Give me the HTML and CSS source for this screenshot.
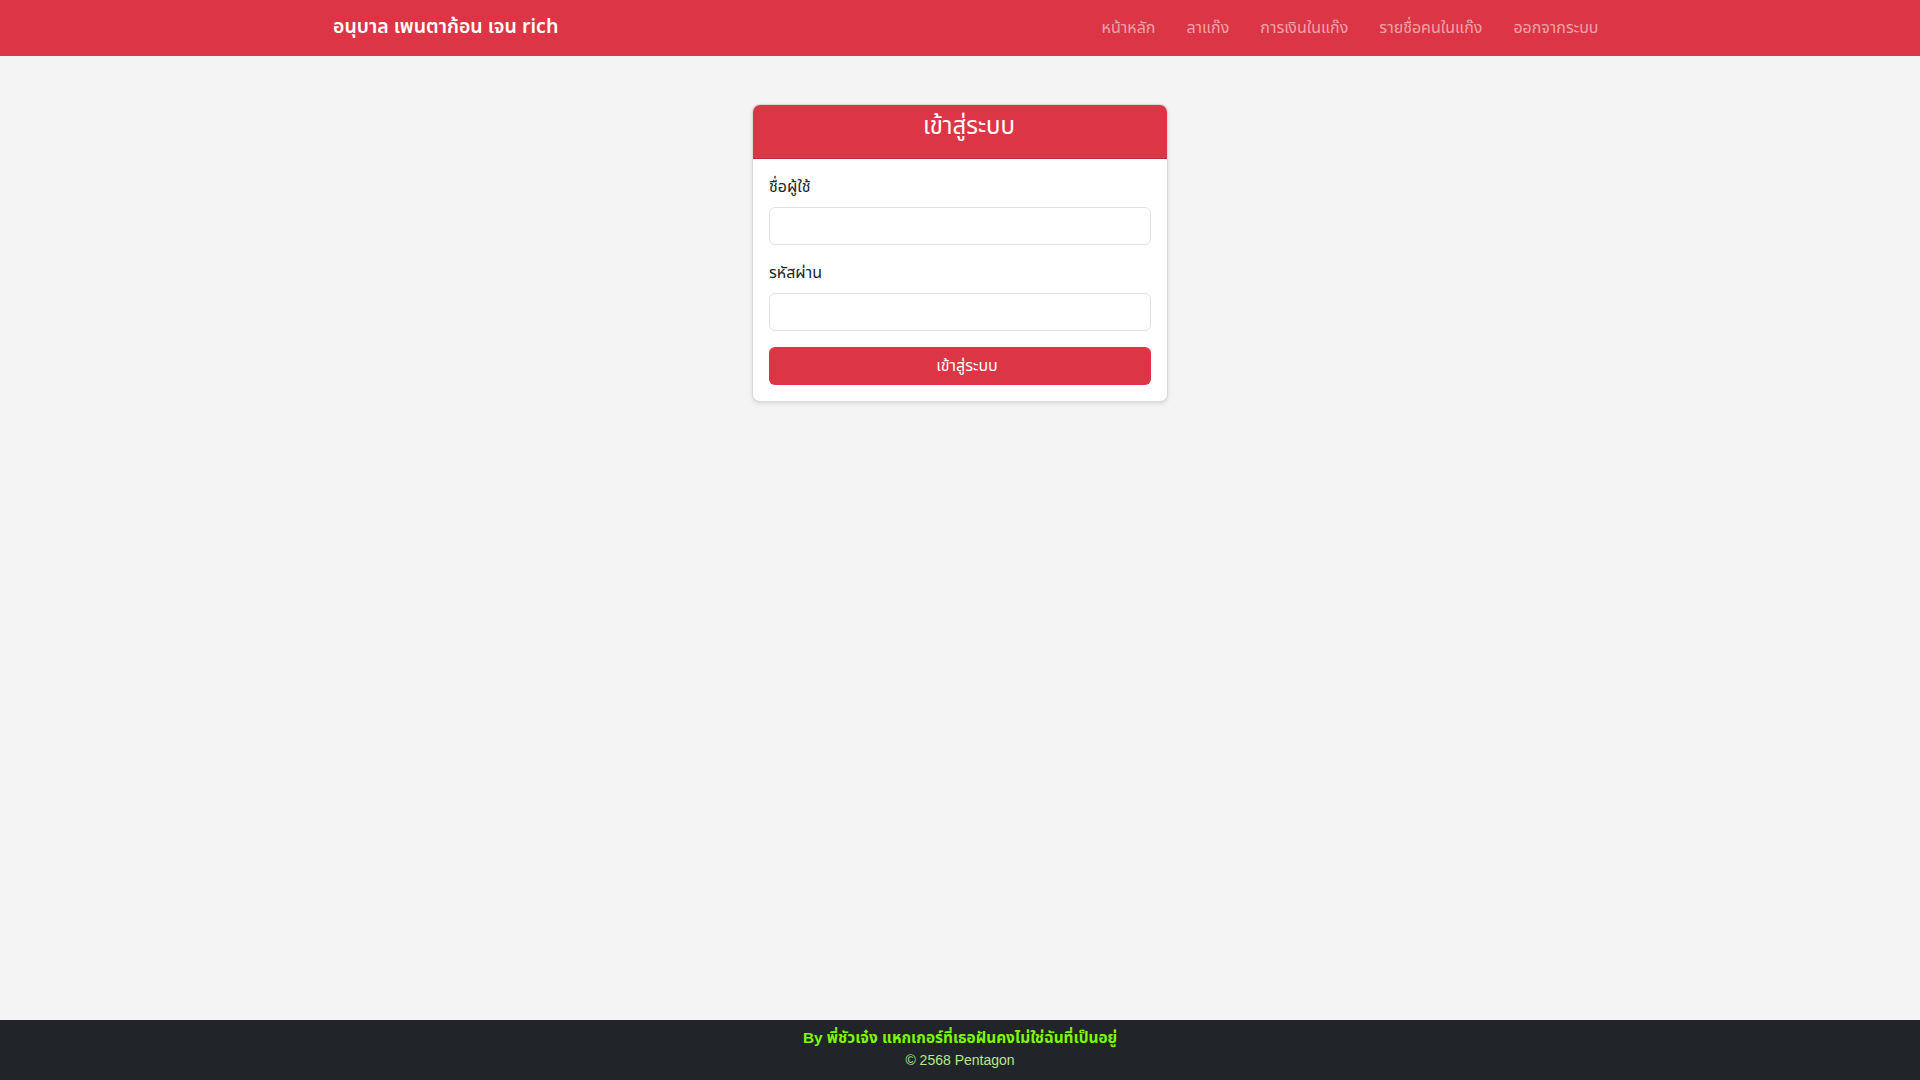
FILE: index.html
```html
<!DOCTYPE html>
<html lang="th">
<head>
<meta charset="utf-8">
<title>อนุบาล เพนตาก้อน เจน rich</title>
<link rel="stylesheet" href="styles.css">
</head>
<body>
<nav class="navbar">
  <div class="nav-inner">
    <a class="brand" href="#">อนุบาล เพนตาก้อน เจน rich</a>
    <ul class="nav-links">
      <li><a href="#">หน้าหลัก</a></li>
      <li><a href="#">ลาแก๊ง</a></li>
      <li><a href="#">การเงินในแก๊ง</a></li>
      <li><a href="#">รายชื่อคนในแก๊ง</a></li>
      <li><a href="#">ออกจากระบบ</a></li>
    </ul>
  </div>
</nav>
<main class="main">
  <div class="card">
    <div class="card-header"><h4 class="card-title">เข้าสู่ระบบ</h4></div>
    <form class="card-body">
      <div class="field">
        <label class="label" for="u">ชื่อผู้ใช้</label>
        <input class="input" id="u" type="text">
      </div>
      <div class="field">
        <label class="label" for="p">รหัสผ่าน</label>
        <input class="input" id="p" type="password">
      </div>
      <button class="btn" type="button">เข้าสู่ระบบ</button>
    </form>
  </div>
</main>
<footer class="footer">
  <p class="footer-credit">By พี่ชัวเจ๋ง แหกเกอร์ที่เธอฝันคงไม่ใช่ฉันที่เป็นอยู่</p>
  <p class="footer-copy">© 2568 Pentagon</p>
</footer>
</body>
</html>
```
FILE: styles.css
```css
* { box-sizing: border-box; }
html, body { height: 100%; }
body {
  margin: 0;
  background: #f4f4f4;
  font-family: "Noto Sans Thai", "Noto Sans", sans-serif;
  font-size: 16px;
  line-height: 1.5;
  color: #212529;
  display: flex;
  flex-direction: column;
}
.navbar {
  background: #dc3545;
  height: 56px;
  flex-shrink: 0;
}
.nav-inner {
  width: 1320px;
  margin: 0 auto;
  padding: 0 6px 0 33px;
  height: 100%;
  display: flex;
  align-items: center;
  justify-content: space-between;
}
.brand {
  color: #fff;
  text-decoration: none;
  font-size: 19.5px;
  font-weight: 600;
}
.nav-links {
  list-style: none;
  margin: 0;
  padding: 0;
  display: flex;
}
.nav-links a {
  display: block;
  padding: 8px 15.5px;
  color: rgba(255, 255, 255, 0.55);
  text-decoration: none;
  font-size: 16px;
}
.main {
  flex: 1;
}
.card {
  width: 416px;
  margin: 48px auto 0;
  background: #fff;
  border: 1px solid rgba(0, 0, 0, 0.15);
  border-radius: 8px;
  box-shadow: 0 2px 4px rgba(0, 0, 0, 0.1);
  overflow: hidden;
}
.card-header {
  background: #dc3545;
  color: #fff;
  text-align: center;
  padding: 8px 16px 8px 34px;
  height: 54px;
  border-bottom: 1px solid rgba(0, 0, 0, 0.15);
}
.card-title {
  margin: 0;
  font-size: 24px;
  font-weight: 400;
  line-height: 1.2;
}
.card-body {
  padding: 16px;
  display: flex;
  flex-direction: column;
}
.field {
  display: flex;
  flex-direction: column;
  margin-bottom: 16px;
}
.label {
  margin-bottom: 8px;
  line-height: 24px;
}
.input {
  height: 38px;
  border: 1px solid #dee2e6;
  border-radius: 6px;
  background: #fff;
  padding: 6px 12px;
  font: inherit;
}
.btn {
  height: 38px;
  border: 0;
  border-radius: 6px;
  background: #dc3545;
  color: #fff;
  font: inherit;
  padding: 0 0 0 14px;
  cursor: pointer;
}
.footer {
  background: #212529;
  height: 60px;
  flex-shrink: 0;
  padding: 6px 0 0;
  text-align: center;
  font-family: "Liberation Sans", "Noto Sans Thai", sans-serif;
}
.footer p { margin: 0; }
.footer-credit {
  color: #7cfc00;
  font-weight: 700;
  font-size: 15.4px;
  line-height: 24px;
}
.footer-copy {
  color: #b6e88a;
  font-size: 14px;
  line-height: 21px;
}
```
